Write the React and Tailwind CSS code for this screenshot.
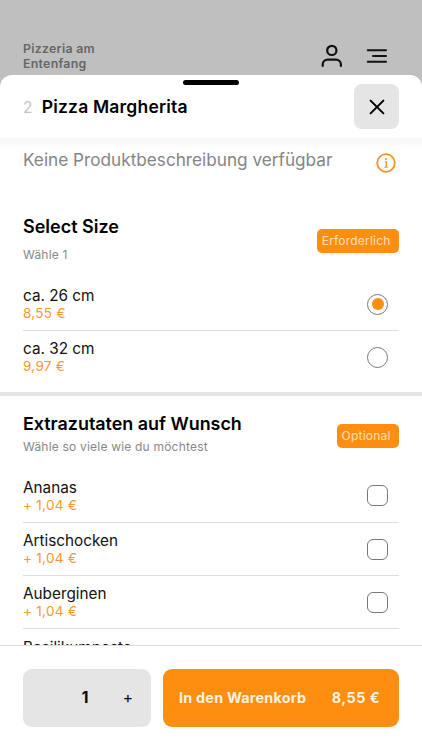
import { useState } from 'react'

const sizes = [
  { name: 'ca. 26 cm', price: '8,55 €' },
  { name: 'ca. 32 cm', price: '9,97 €' },
]

const extras = [
  { name: 'Ananas', price: '+ 1,04 €' },
  { name: 'Artischocken', price: '+ 1,04 €' },
  { name: 'Auberginen', price: '+ 1,04 €' },
  { name: 'Basilikumpesto', price: '+ 1,04 €' },
]

function Option({ item, onClick, last, children }) {
  return (
    <button onClick={onClick} className={`flex w-full h-[53.3px] shrink-0 items-center justify-between pr-[11px] text-left border-b ${last ? 'border-transparent' : 'border-[#dedede]'}`}>
      <span className="flex flex-col pt-[1px]">
        <span className="text-[15.3px] leading-[18px] text-[#111]">{item.name}</span>
        <span className="text-[13.5px] leading-[17px] tracking-[0.3px] text-[#f9982f]">{item.price}</span>
      </span>
      {children}
    </button>
  )
}

function Badge({ children }) {
  return (
    <span className="flex h-6 shrink-0 items-center rounded-[5px] bg-[#fd8e10] pl-[4.5px] pr-[8.5px] text-[12px] tracking-[0.2px] text-[#ffe0b8]">{children}</span>
  )
}

export default function App() {
  const [size, setSize] = useState(0)
  const [checked, setChecked] = useState([])
  const [count, setCount] = useState(1)

  function toggle(name) {
    setChecked(checked.includes(name) ? checked.filter(n => n !== name) : [...checked, name])
  }

  return (
    <div className="flex h-[750px] w-[422px] flex-col overflow-hidden bg-[#bfbfbf] font-['Inter',sans-serif] text-black">
      <header className="flex h-[75px] shrink-0 items-start justify-between pl-[23px] pr-[34px] pt-[41px]">
        <p className="text-[12.3px] font-semibold leading-[15px] tracking-[0.3px] text-[#666]">Pizzeria am<br />Entenfang</p>
        <div className="flex items-center gap-[23px] pt-[3px]">
          <svg width="22" height="24" viewBox="0 0 22 24" fill="none" stroke="#111" strokeWidth="2.2" strokeLinecap="round">
            <circle cx="10.8" cy="6.4" r="4.6" />
            <path d="M1.7 22v-1.4a5 5 0 0 1 5-5h8.2a5 5 0 0 1 5 5V22" />
          </svg>
          <svg width="22" height="16" viewBox="0 0 22 16" fill="none" stroke="#111" strokeWidth="2.1" strokeLinecap="round">
            <path d="M1.8 2.3h18.2M7 8h13M1.8 13.7h18.2" />
          </svg>
        </div>
      </header>

      <main className="flex min-h-0 flex-1 flex-col overflow-hidden rounded-t-[12px] bg-white">
        <div className="relative flex h-[63px] shrink-0 items-center justify-between px-[23px]">
          <span className="absolute left-[183px] top-[5px] h-[5px] w-[56px] rounded-full bg-black" />
          <h1 className="flex items-baseline gap-[9px] pt-[1px] text-[17.5px] font-semibold tracking-[0.2px]">
            <span className="text-[15.5px] font-normal text-[#c4c4c4]">2</span>
            Pizza Margherita
          </h1>
          <button className="flex size-[45px] items-center justify-center rounded-[8px] bg-[#e5e5e5]">
            <svg width="16" height="16" viewBox="0 0 16 16" stroke="black" strokeWidth="2" strokeLinecap="round">
              <path d="M1.6 1.6l12.8 12.8M14.4 1.6L1.6 14.4" />
            </svg>
          </button>
        </div>

        <div className="flex min-h-0 flex-1 flex-col overflow-hidden">
          <div className="flex h-[67px] shrink-0 items-start justify-between bg-linear-to-b from-[#f7f7f7] to-white to-[12px] pl-[23px] pr-[26px] pt-[11px]">
            <p className="text-[17.2px] leading-[22px] text-[#858585]">Keine Produktbeschreibung verfügbar</p>
            <svg className="mt-[4px]" width="20" height="20" viewBox="0 0 20 20" fill="none" stroke="#f5922a" strokeWidth="1.8" strokeLinecap="round">
              <circle cx="10" cy="10" r="8.8" />
              <path d="M9.4 8.8h.8v5.2M9 14.2h2.2" strokeWidth="1.3" />
              <circle cx="10" cy="6" r="1.1" fill="#f5922a" stroke="none" />
            </svg>
          </div>

          <section className="flex h-[187px] shrink-0 flex-col px-[23px]">
            <div className="flex h-[73px] shrink-0 justify-between pt-[11px]">
              <div>
                <h2 className="text-[18px] font-semibold leading-[22px]">Select Size</h2>
                <p className="mt-[9px] text-[12px] leading-[16px] tracking-[0.2px] text-[#888]">Wähle 1</p>
              </div>
              <div className="pt-[13px]"><Badge>Erforderlich</Badge></div>
            </div>
            {sizes.map((s, i) => (
              <Option key={s.name} item={s} onClick={() => setSize(i)} last={i === sizes.length - 1}>
                <span className="flex size-[21px] items-center justify-center rounded-full border border-[#777]">
                  {size === i && <span className="size-[12px] rounded-full bg-[#fd8e10]" />}
                </span>
              </Option>
            ))}
          </section>

          <div className="h-[4px] shrink-0 bg-[#e5e5e5]" />

          <section className="flex flex-col px-[23px]">
            <div className="flex h-[73.6px] shrink-0 justify-between pt-[17px]">
              <div>
                <h2 className="text-[17.9px] font-semibold leading-[22px]">Extrazutaten auf Wunsch</h2>
                <p className="mt-[4px] text-[12px] leading-[16px] tracking-[0.2px] text-[#888]">Wähle so viele wie du möchtest</p>
              </div>
              <div className="pt-[11px]"><Badge>Optional</Badge></div>
            </div>
            {extras.map(e => (
              <Option key={e.name} item={e} onClick={() => toggle(e.name)}>
                <span className={`size-[21px] rounded-[6px] border border-[#777] ${checked.includes(e.name) ? 'bg-[#fd8e10]' : 'bg-white'}`} />
              </Option>
            ))}
          </section>
        </div>

        <footer className="flex h-[105px] shrink-0 gap-[12px] border-t border-[#dedede] bg-white px-[23px] pt-[23px]">
          <div className="grid h-[58px] w-[128px] grid-cols-[42px_40px_46px] items-center rounded-[9px] bg-[#e5e5e5] text-center">
            <span />
            <span className="text-[15.5px] font-bold">{count}</span>
            <button onClick={() => setCount(count + 1)} className="pb-[1px] text-[15.5px]">+</button>
          </div>
          <button className="flex h-[58px] flex-1 items-center justify-between rounded-[9px] bg-[#fd8e10] pl-[16px] pr-[19px] text-[14.3px] font-bold text-[#fff3e0]">
            <span className="tracking-[0.26px]">In den Warenkorb</span>
            <span className="tracking-[0.5px]">8,55 €</span>
          </button>
        </footer>
      </main>
    </div>
  )
}
